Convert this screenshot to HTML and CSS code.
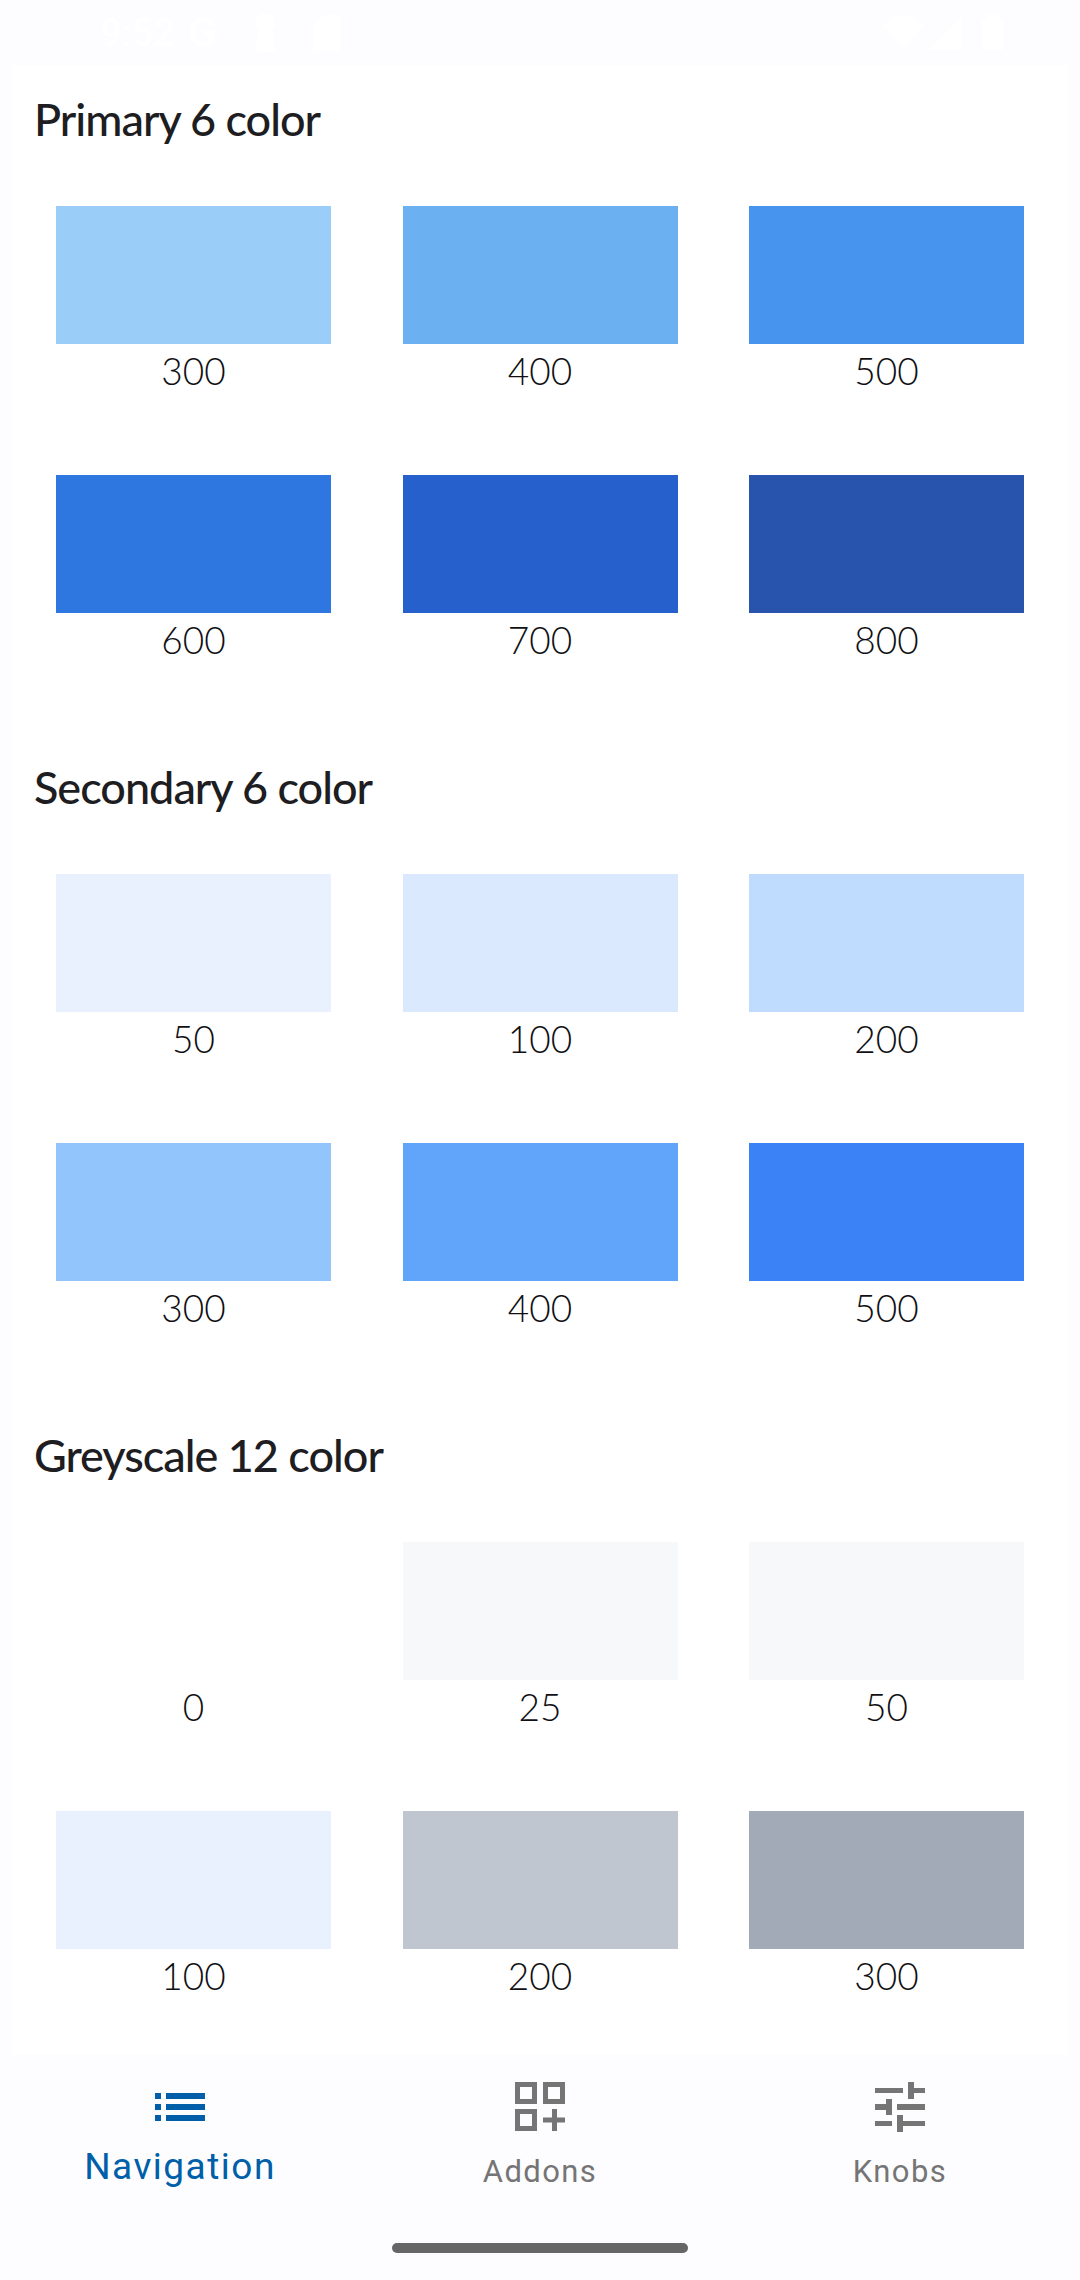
FILE: index.html
```html
<!DOCTYPE html>
<html>
  <head>
    <title>Colors</title>
    <meta name="viewport" content="width=device-width, initial-scale=1" />
    <link rel="stylesheet" href="styles.css">
  </head>
  <body>
    <div class="status-bar">
      <div class="status-left">
        <span class="status-time">9:52</span>
        <span class="status-g">G</span>
        <svg class="status-key" width="20" height="38" viewBox="0 0 20 38">
          <path d="M10 0c6 0 10 3 10 9 0 4-2 6-3 7l3 21c0 1-20 1-20 0l3-21C2 15 0 13 0 9 0 3 4 0 10 0z" fill="#fff" />
        </svg>
        <svg class="status-sd" width="28" height="36" viewBox="0 0 28 36">
          <path d="M10 0h15a3 3 0 0 1 3 3v30a3 3 0 0 1-3 3H3a3 3 0 0 1-3-3V10z" fill="#fff" />
        </svg>
      </div>
      <svg class="status-right" width="120" height="36" viewBox="0 0 120 36">
        <path d="M0 11C5 4 13 0 20 0s16 4 21 11L20 34z" fill="#fff" />
        <path d="M45 35L79 1v34z" fill="#fff" />
        <path d="M99 5h4V0h13v5h4v30H99z" fill="#fff" />
      </svg>
    </div>

    <main class="content">
      <section class="group">
        <h2 class="group-title">Primary 6 color</h2>
        <div class="swatches">
          <div class="swatch"><div class="chip c-p300"></div><span>300</span></div>
          <div class="swatch"><div class="chip c-p400"></div><span>400</span></div>
          <div class="swatch"><div class="chip c-p500"></div><span>500</span></div>
          <div class="swatch"><div class="chip c-p600"></div><span>600</span></div>
          <div class="swatch"><div class="chip c-p700"></div><span>700</span></div>
          <div class="swatch"><div class="chip c-p800"></div><span>800</span></div>
        </div>
      </section>

      <section class="group">
        <h2 class="group-title">Secondary 6 color</h2>
        <div class="swatches">
          <div class="swatch"><div class="chip c-s50"></div><span>50</span></div>
          <div class="swatch"><div class="chip c-s100"></div><span>100</span></div>
          <div class="swatch"><div class="chip c-s200"></div><span>200</span></div>
          <div class="swatch"><div class="chip c-s300"></div><span>300</span></div>
          <div class="swatch"><div class="chip c-s400"></div><span>400</span></div>
          <div class="swatch"><div class="chip c-s500"></div><span>500</span></div>
        </div>
      </section>

      <section class="group">
        <h2 class="group-title">Greyscale 12 color</h2>
        <div class="swatches">
          <div class="swatch"><div class="chip c-g0"></div><span>0</span></div>
          <div class="swatch"><div class="chip c-g25"></div><span>25</span></div>
          <div class="swatch"><div class="chip c-g50"></div><span>50</span></div>
          <div class="swatch"><div class="chip c-g100"></div><span>100</span></div>
          <div class="swatch"><div class="chip c-g200"></div><span>200</span></div>
          <div class="swatch"><div class="chip c-g300"></div><span>300</span></div>
        </div>
      </section>
    </main>

    <nav class="bottom-nav">
      <div class="nav-items">
        <div class="nav-item active">
          <svg class="nav-icon" width="60" height="60" viewBox="0 0 60 60">
            <path d="M5 16h6v6H5zM5 27h6v6H5zM5 38h6v6H5zM16 16h39v6H16zM16 27h39v6H16zM16 38h39v6H16z" />
          </svg>
          <span class="nav-label">Navigation</span>
        </div>
        <div class="nav-item">
          <svg class="nav-icon" width="60" height="60" viewBox="0 0 60 60">
            <path fill-rule="evenodd" d="M5 5h22v22H5zM10 10v12h12V10zM33 5h22v22H33zM38 10v12h12V10zM5 32h22v22H5zM10 37v12h12V37z" />
            <path d="M42 32h5v8.500h8v5h-8V54h-5v-8.500h-9v-5h9z" />
          </svg>
          <span class="nav-label">Addons</span>
        </div>
        <div class="nav-item">
          <svg class="nav-icon" width="60" height="60" viewBox="0 0 60 60">
            <path d="M5 11h28v5H5zM38 5h6v6h11v5H44v6h-6zM5 27h11v-5h6v16h-6v-5H5zM27 27h28v6H27zM5 44h17v5H5zM27 38h6v6h22v5H33v6h-6z" />
          </svg>
          <span class="nav-label">Knobs</span>
        </div>
      </div>
      <div class="home-bar"></div>
    </nav>
  </body>
</html>
```

FILE: styles.css
```css
* {
  box-sizing: border-box;
}

body {
  margin: 0;
  width: 1080px;
  height: 2280px;
  overflow: hidden;
  display: flex;
  flex-direction: column;
  background-color: #fdfdff;
  font-family: Lato, sans-serif;
}

.status-bar {
  height: 65px;
  flex-shrink: 0;
  display: flex;
  justify-content: space-between;
  align-items: center;
  padding: 0 77px 0 100px;
  color: #ffffff;
  font-family: Roboto, sans-serif;
}

.status-left {
  display: flex;
  align-items: center;
}

.status-time {
  width: 88px;
  font-size: 38px;
  font-weight: 500;
}

.status-g {
  width: 67px;
  font-size: 42px;
  font-weight: 700;
}

.status-key {
  margin-right: 38px;
}

.content {
  flex: 1;
  min-height: 0;
  overflow: hidden;
  margin: 0 12px;
  padding-left: 22px;
  background-color: #ffffff;
}

.group {
  margin-bottom: 66px;
}

.group-title {
  margin: 0;
  height: 141px;
  padding-top: 22px;
  font-size: 45px;
  line-height: 64px;
  font-weight: 500;
  letter-spacing: -1px;
  color: #1d1d22;
}

.swatches {
  display: grid;
  grid-template-columns: repeat(3, 275px);
  column-gap: 71.5px;
  row-gap: 77px;
  padding-left: 22px;
}

.swatch {
  display: flex;
  flex-direction: column;
  align-items: center;
  color: #101014;
  font-size: 37px;
  font-weight: 300;
  line-height: 54px;
}

.chip {
  width: 275px;
  height: 138px;
}

.c-p300 { background-color: #9acdf8; }
.c-p400 { background-color: #6bb0f1; }
.c-p500 { background-color: #4694ee; }
.c-p600 { background-color: #2e77e0; }
.c-p700 { background-color: #2660cc; }
.c-p800 { background-color: #2854ae; }

.c-s50 { background-color: #e8f1fd; }
.c-s100 { background-color: #dbe9fe; }
.c-s200 { background-color: #bfdbfe; }
.c-s300 { background-color: #93c5fd; }
.c-s400 { background-color: #60a5fa; }
.c-s500 { background-color: #3b82f6; }

.c-g0 { background-color: #ffffff; }
.c-g25 { background-color: #f7f8fa; }
.c-g50 { background-color: #f7f8fa; }
.c-g100 { background-color: #e8f1fd; }
.c-g200 { background-color: #bfc6cf; }
.c-g300 { background-color: #a3aab7; }

.bottom-nav {
  height: 225px;
  flex-shrink: 0;
  display: flex;
  flex-direction: column;
  align-items: center;
  background-color: #fdfdff;
}

.nav-items {
  width: 100%;
  display: grid;
  grid-template-columns: repeat(3, 360px);
  padding-top: 22px;
}

.nav-item {
  display: flex;
  flex-direction: column;
  align-items: center;
  color: #757575;
  font-family: Roboto, sans-serif;
}

.nav-icon {
  fill: #757575;
}

.nav-label {
  margin-top: 15px;
  font-size: 31px;
  line-height: 40px;
  letter-spacing: 1.4px;
}

.nav-item.active {
  color: #005fa8;
}

.nav-item.active .nav-icon {
  fill: #005fa8;
}

.nav-item.active .nav-label {
  margin-top: 10px;
  font-size: 37px;
  letter-spacing: 1.5px;
}

.home-bar {
  width: 296px;
  height: 10px;
  margin-top: 51px;
  border-radius: 5px;
  background-color: #666666;
}
```
